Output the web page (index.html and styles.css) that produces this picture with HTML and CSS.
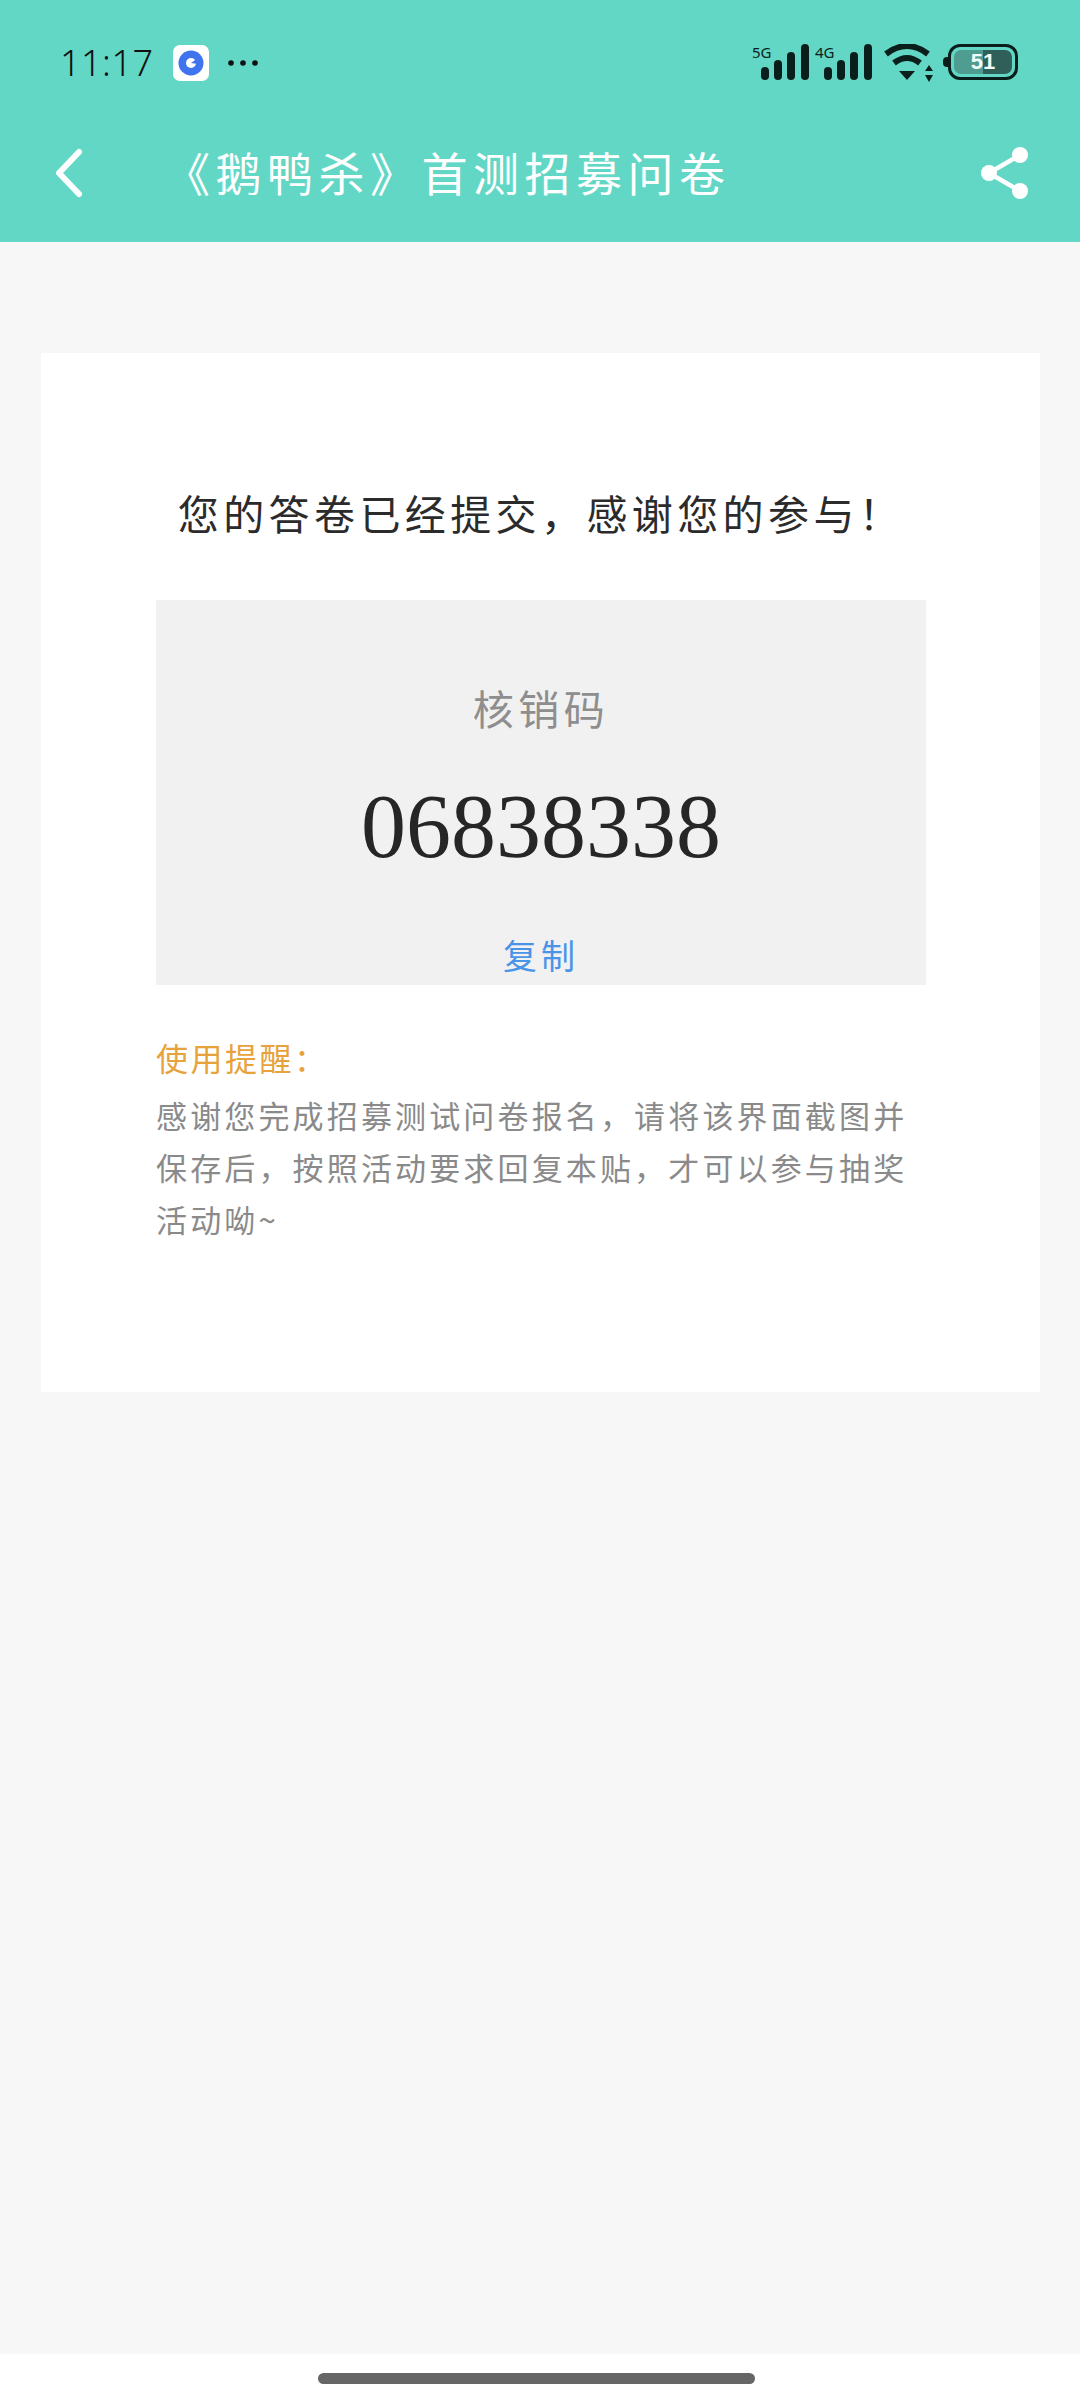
FILE: index.html
```html
<!DOCTYPE html>
<html lang="zh-CN">
<head>
  <meta charset="UTF-8">
  <title>《鹅鸭杀》首测招募问卷</title>
  <link rel="stylesheet" href="styles.css">
</head>
<body>
  <header class="top">
    <div class="status">
      <div class="status-left">
        <span class="time">11:17</span>
        <svg class="app-icon" width="36" height="36" viewBox="0 0 36 36">
          <rect width="36" height="36" rx="7" fill="#fff"/>
          <circle cx="18" cy="18" r="12.5" fill="#3f74ee"/>
          <circle cx="18" cy="18" r="5" fill="#fff"/>
          <path d="M18 18 L25 13 L25 19 Z" fill="#3f74ee"/>
        </svg>
        <svg class="more" width="30" height="6" viewBox="0 0 30 6" fill="#111">
          <circle cx="3" cy="3" r="2.8"/><circle cx="15" cy="3" r="2.8"/><circle cx="27" cy="3" r="2.8"/>
        </svg>
      </div>
      <div class="status-right">
        <div class="signal">
          <span class="net">5G</span>
          <svg width="58" height="36" viewBox="0 0 58 36" fill="#0a1f1c">
            <rect x="9" y="23" width="8" height="13" rx="4"/>
            <rect x="22" y="16" width="8" height="20" rx="4"/>
            <rect x="35" y="8" width="8" height="28" rx="4"/>
            <rect x="49" y="0" width="8" height="36" rx="4"/>
          </svg>
        </div>
        <div class="signal">
          <span class="net">4G</span>
          <svg width="58" height="36" viewBox="0 0 58 36" fill="#0a1f1c">
            <rect x="9" y="23" width="8" height="13" rx="4"/>
            <rect x="22" y="16" width="8" height="20" rx="4"/>
            <rect x="35" y="8" width="8" height="28" rx="4"/>
            <rect x="49" y="0" width="8" height="36" rx="4"/>
          </svg>
        </div>
        <svg class="wifi" width="50" height="38" viewBox="0 0 50 38" fill="none" stroke="#0a1f1c">
          <path d="M2 10 Q23 -6 44 10" stroke-width="6"/>
          <path d="M10 19 Q23 9 36 19" stroke-width="6"/>
          <path d="M15 27 L31 27 L23 36 Z" fill="#0a1f1c" stroke="none"/>
          <path d="M45 21 L49 27 L41 27 Z M41 31 L49 31 L45 38 Z" fill="#0a1f1c" stroke="none"/>
        </svg>
        <div class="battery">
          <span class="battery-nub"></span>
          <div class="battery-inner"><span class="battery-num">51</span></div>
        </div>
      </div>
    </div>
    <nav class="nav">
      <svg class="back" width="30" height="50" viewBox="0 0 30 50" fill="none" stroke="#fff" stroke-width="6" stroke-linecap="round" stroke-linejoin="round">
        <path d="M25 4 L5 25 L25 46"/>
      </svg>
      <h1 class="nav-title">《鹅鸭杀》首测招募问卷</h1>
      <svg class="share" width="50" height="54" viewBox="0 0 50 54" fill="#fff" stroke="#fff">
        <path d="M40 9 L9 27 L40 45" fill="none" stroke-width="4.5"/>
        <circle cx="40" cy="9" r="8" stroke="none"/>
        <circle cx="9" cy="27" r="8" stroke="none"/>
        <circle cx="40" cy="45" r="8" stroke="none"/>
      </svg>
    </nav>
  </header>

  <main class="page">
    <section class="card">
      <h2 class="done">您的答卷已经提交，感谢您的参与！</h2>
      <div class="code-box">
        <div class="code-label">核销码</div>
        <div class="code-num">06838338</div>
        <a class="code-copy">复制</a>
      </div>
      <div class="tip-title">使用提醒：</div>
      <p class="tip-text">感谢您完成招募测试问卷报名，请将该界面截图并保存后，按照活动要求回复本贴，才可以参与抽奖活动呦~</p>
    </section>
  </main>

  <footer class="home-bar"><span class="home-pill"></span></footer>
</body>
</html>
```

FILE: styles.css
```css
* {
  box-sizing: border-box;
}

body {
  margin: 0;
  width: 1080px;
  height: 2401px;
  display: flex;
  flex-direction: column;
  background-color: #f7f7f7;
  font-family: "Noto Sans CJK SC", "Noto Sans", sans-serif;
  overflow: hidden;
}

.top {
  height: 242px;
  flex: none;
  background-color: #63d7c5;
}

.status {
  height: 104px;
  padding: 44px 62px 0 60px;
  display: flex;
  justify-content: space-between;
  align-items: flex-start;
}

.status-left {
  display: flex;
  align-items: center;
  height: 38px;
}

.time {
  font-family: "Noto Sans", sans-serif;
  font-weight: 300;
  font-size: 36px;
  line-height: 36px;
  letter-spacing: 0.5px;
  color: #111;
  width: 113px;
}

.more {
  margin-left: 19px;
}

.status-right {
  display: flex;
  align-items: flex-start;
}

.signal {
  position: relative;
  width: 63px;
}

.signal svg {
  display: block;
}

.net {
  position: absolute;
  left: 0;
  top: 1px;
  font-family: "Noto Sans", sans-serif;
  font-size: 15px;
  line-height: 15px;
  color: #0a1f1c;
}

.wifi {
  margin-left: 6px;
}

.battery {
  position: relative;
  margin-left: 14px;
  width: 70px;
  height: 36px;
  border: 3px solid #0a1f1c;
  border-radius: 12px;
  padding: 3px;
}

.battery-nub {
  position: absolute;
  left: -8px;
  top: 10px;
  width: 5px;
  height: 10px;
  background-color: #0a1f1c;
  border-radius: 4px 0 0 4px;
}

.battery-inner {
  height: 100%;
  border-radius: 7px;
  background: linear-gradient(90deg, #4f9c90 50%, #2f5f58 50%);
  display: flex;
  align-items: center;
  justify-content: center;
}

.battery-num {
  font-family: "Liberation Sans", sans-serif;
  font-weight: 700;
  font-size: 22px;
  color: #f2fbf9;
}

.nav {
  height: 138px;
  padding: 0 50px 0 54px;
  display: flex;
  align-items: center;
}

.nav-title {
  margin: -5px 0 0 80px;
  flex: 1;
  font-size: 46px;
  font-weight: 400;
  letter-spacing: 5.5px;
  color: #fff;
  white-space: nowrap;
}

.page {
  flex: 1;
  padding: 111px 40px 0 41px;
}

.card {
  height: 1039px;
  background-color: #fff;
  padding: 124px 114px 0 115px;
}

.done {
  margin: 0;
  font-size: 41px;
  line-height: 70px;
  font-weight: 400;
  letter-spacing: 4.4px;
  color: #2b2b2b;
  text-align: center;
  white-space: nowrap;
}

.code-box {
  margin-top: 53px;
  height: 385px;
  background-color: #f1f1f1;
  text-align: center;
  padding-top: 77px;
}

.code-label {
  font-size: 41px;
  line-height: 60px;
  letter-spacing: 4.5px;
  color: #8e8e8e;
}

.code-num {
  margin-top: 40px;
  font-family: "Liberation Serif", serif;
  font-size: 90px;
  line-height: 100px;
  color: #262626;
}

.code-copy {
  display: block;
  margin-top: 53px;
  font-size: 34px;
  line-height: 50px;
  letter-spacing: 4px;
  color: #4a94e8;
}

.tip-title {
  margin-top: 47px;
  font-size: 32px;
  line-height: 50px;
  letter-spacing: 2.5px;
  color: #e8a23c;
}

.tip-text {
  margin: 7px 0 0;
  font-size: 31px;
  line-height: 52px;
  letter-spacing: 3.15px;
  color: #8a8a8a;
}

.home-bar {
  height: 47px;
  flex: none;
  background-color: #fff;
  padding: 19px 7px 0 0;
  display: flex;
  justify-content: center;
  align-items: flex-start;
}

.home-pill {
  width: 437px;
  height: 11px;
  border-radius: 6px;
  background-color: #666;
}
```
